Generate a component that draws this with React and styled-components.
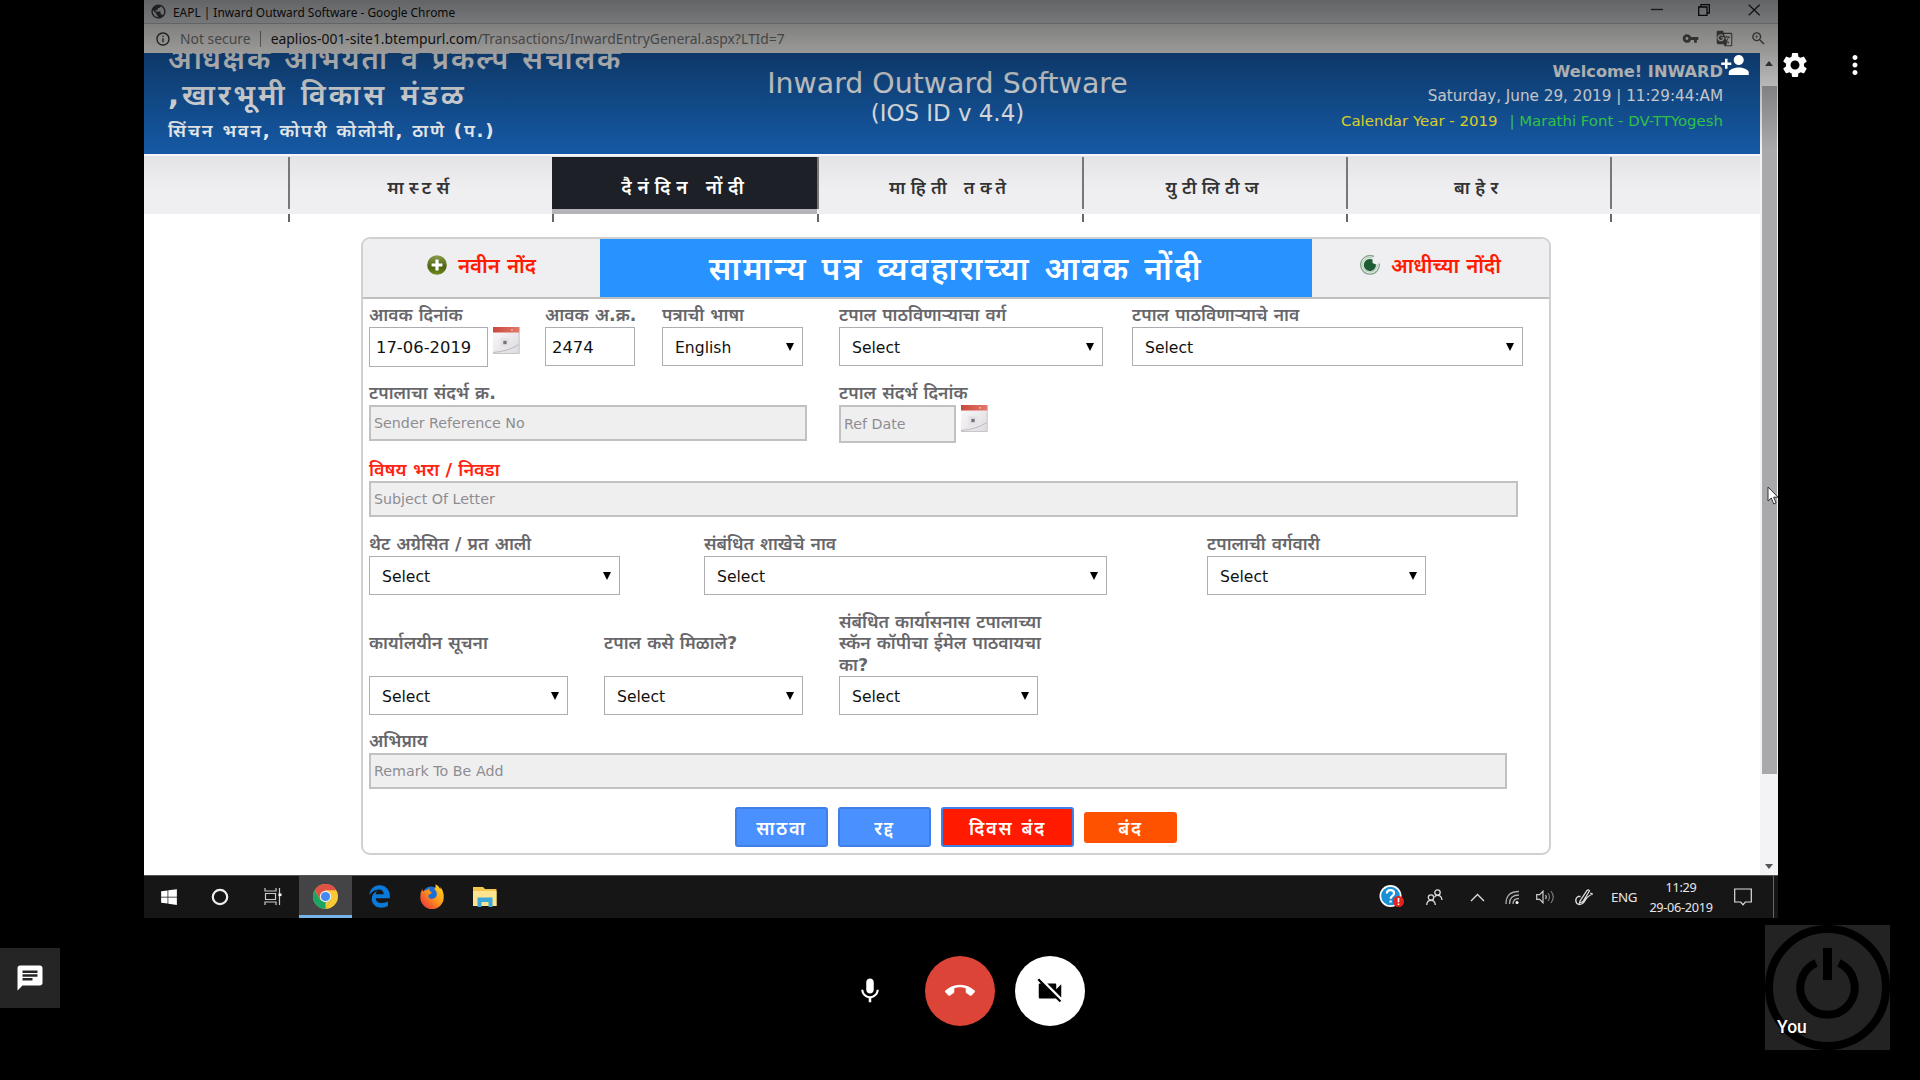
import React from "react";
import styled, { createGlobalStyle } from "styled-components";
import {
  MdPersonAdd, MdSettings, MdMoreVert, MdMic, MdCallEnd, MdVideocamOff, MdChat,
  MdVpnKey, MdGTranslate, MdZoomIn, MdPublic, MdInfoOutline,
} from "react-icons/md";
import { FaWindows, FaEdgeLegacy } from "react-icons/fa";

const GlobalStyle = createGlobalStyle`
  * { box-sizing: border-box; }
  body {
    margin: 0;
    background: #000;
    font-family: "DejaVu Sans", "Noto Sans", sans-serif;
    overflow: hidden;
  }
`;

/* ---------- call window ---------- */
const Call = styled.div`
  position: relative;
  width: 1920px;
  height: 1080px;
  background: #000;
  display: flex;
  flex-direction: column;
  overflow: hidden;
`;
const Shared = styled.div`
  position: relative;
  width: 1634px;
  height: 918px;
  margin-left: 144px;
  display: flex;
  flex-direction: column;
  background: #fff;
  overflow: hidden;
`;
const TopShade = styled.div`
  position: absolute;
  inset: 0 0 auto 0;
  height: 150px;
  background: linear-gradient(rgba(0, 0, 0, 0.56), rgba(0, 0, 0, 0));
`;
const CallActions = styled.div`
  position: absolute;
  top: 50px;
  right: 50px;
  display: flex;
  gap: 30px;
  color: #fff;
  font-size: 30px;
  svg { display: block; }
`;

/* ---------- browser chrome ---------- */
const TitleBar = styled.div`
  height: 24px;
  flex: none;
  display: flex;
  align-items: center;
  padding: 0 17px 0 6px;
  gap: 6px;
  background: #e2e4e8;
  border-bottom: 1px solid #b9bbbe;
  font: 11.9px "Noto Sans", sans-serif;
  color: #111;
`;
const GlobeMark = styled(MdPublic)`
  font-size: 17px;
  color: #444;
`;
const WindowButtons = styled.div`
  margin-left: auto;
  display: flex;
  align-items: center;
  gap: 35px;
  padding-bottom: 3px;
  svg { display: block; }
  svg:nth-child(2) { margin-right: 3px; }
`;
const AddressBar = styled.div`
  height: 29px;
  flex: none;
  display: flex;
  align-items: center;
  padding: 0 11px 0 11px;
  background: #f2f1ef;
  font: 13.9px "Noto Sans", sans-serif;
  color: #777;
`;
const InfoMark = styled(MdInfoOutline)`
  font-size: 16px;
  color: #333;
  margin-right: 9px;
`;
const AddressRule = styled.i`
  width: 1px;
  height: 16px;
  background: #888;
  margin: 0 10px 0 9px;
`;
const Host = styled.span`
  color: #1b1b1b;
`;
const AddressIcons = styled.div`
  margin-left: auto;
  display: flex;
  align-items: center;
  gap: 17px;
  color: #555;
  font-size: 17px;
`;

/* ---------- page ---------- */
const Viewport = styled.div`
  flex: 1;
  display: flex;
  min-height: 0;
`;
const Page = styled.div`
  width: 1616px;
  display: flex;
  flex-direction: column;
`;
const Scrollbar = styled.div`
  flex: 1;
  display: flex;
  flex-direction: column;
  align-items: center;
  background: #f3f2f4;
  padding: 8px 0 6px;
`;
const Thumb = styled.div`
  width: 15px;
  height: 688px;
  margin-top: 20px;
  background: #a9a9ab;
`;
const ScrollArrow = styled.div`
  width: 0;
  height: 0;
  border: 4px solid transparent;
  border-width: ${(p) => (p.$up ? "0 4px 5px" : "5px 4px 0")};
  border-color: ${(p) => (p.$up ? "transparent transparent #444" : "#555 transparent transparent")};
  margin-top: ${(p) => (p.$up ? "0" : "auto")};
`;

const Banner = styled.header`
  height: 101px;
  flex: none;
  display: grid;
  grid-template-columns: 518px 1fr 518px;
  background: #1558a3;
  color: #f3f6f8;
  overflow: hidden;
`;
const Office = styled.div`
  padding-left: 24px;
  margin-top: -12px;
  font-weight: 600;
  white-space: nowrap;
`;
const OfficeName = styled.div`
  font-size: 29px;
  line-height: 36px;
  letter-spacing: ${(p) => p.$track}px;
`;
const OfficeAddress = styled.div`
  font-size: 18.2px;
  line-height: 36px;
  letter-spacing: 1.75px;
`;
const Product = styled.div`
  text-align: center;
  padding: 11px 9px 0 0;
`;
const ProductName = styled.div`
  font-size: 28.4px;
  line-height: 39px;
  white-space: nowrap;
`;
const ProductVersion = styled.div`
  font-size: 22.9px;
  line-height: 20px;
`;
const Session = styled.div`
  display: flex;
  flex-direction: column;
  align-items: flex-end;
  padding: 6px 37px 0 0;
  font-size: 15.2px;
  line-height: 25px;
  white-space: pre;
`;
const Welcome = styled.strong`
  font-size: 16.2px;
`;
const YearLine = styled.div`
  font-size: 14.95px;
  color: #35d94c;
`;
const Year = styled.span`
  color: #f2e52e;
  margin-right: 12px;
`;

const Nav = styled.nav`
  height: 60px;
  flex: none;
  display: flex;
  padding: 3px 0 0 144px;
  background: linear-gradient(#e3e3e6, #efeef1 60%);
  box-shadow: inset 0 2px 0 #f6f6f8;
`;
const NavItem = styled.a`
  width: ${(p) => p.$w}px;
  height: 52px;
  display: flex;
  align-items: center;
  justify-content: center;
  padding-top: 8px;
  border-left: 2px solid #77777a;
  font-size: ${(p) => (p.$active ? 19 : 18)}px;
  letter-spacing: ${(p) => (p.$active ? 5.8 : 5.3)}px;
  font-weight: 600;
  color: ${(p) => (p.$active ? "#fff" : "#333")};
  background: ${(p) => (p.$active ? "#1d2026" : "transparent")};
  border-left-color: ${(p) => (p.$active ? "#1d2026" : "#77777a")};
  box-shadow: ${(p) => (p.$active ? "0 5px 0 #b4b4b9" : "none")};
`;
const Ticks = styled.div`
  height: 8px;
  flex: none;
  display: flex;
  padding-left: 144px;
`;
const Tick = styled.i`
  width: ${(p) => p.$w}px;
  border-left: 2px solid #666;
`;

const Panel = styled.main`
  width: 1190px;
  height: 618px;
  margin: 15px 0 0 217px;
  border: 2px solid #d0cfd2;
  border-radius: 9px;
  display: flex;
  flex-direction: column;
  overflow: hidden;
`;
const PanelHead = styled.div`
  height: 60px;
  flex: none;
  display: grid;
  grid-template-columns: 237px 712px 1fr;
  border-bottom: 2px solid #bfbfc2;
`;
const HeadLink = styled.a`
  display: flex;
  align-items: center;
  justify-content: center;
  gap: 11px;
  padding-bottom: 6px;
  background: #efeef0;
  color: #ff1a00;
  font-size: 20.4px;
  font-weight: 600;
`;
const HeadTitle = styled.h1`
  margin: 0;
  padding-bottom: 2px;
  display: flex;
  align-items: center;
  justify-content: center;
  background: #2893ff;
  color: #fff;
  font-size: 31.6px;
  letter-spacing: 2.5px;
  font-weight: 600;
  white-space: nowrap;
`;
const Form = styled.form`
  flex: 1;
  padding: 5px 0 0 6px;
`;
const Row = styled.div`
  display: grid;
  grid-template-columns: ${(p) => p.$cols};
  height: ${(p) => p.$h}px;
  align-items: start;
`;
const Field = styled.div`
  display: flex;
  flex-direction: column;
`;
const Label = styled.label`
  height: ${(p) => (p.$tall ? 65 : 23)}px;
  display: flex;
  align-items: center;
  padding-top: 1px;
  font-size: ${(p) => (p.$red ? 18 : 17.5)}px;
  line-height: 21.3px;
  font-weight: 600;
  white-space: pre;
  color: ${(p) => (p.$red ? "#ff2411" : "#67676b")};
`;
const ControlLine = styled.div`
  display: flex;
  gap: 5px;
`;
const Box = styled.div`
  width: ${(p) => p.$w}px;
  height: ${(p) => p.$h || 39}px;
  display: flex;
  align-items: center;
  padding: 1px 0 0 6px;
  border: 1px solid #aeadb1;
  background: #fff;
  color: #111;
  font-size: 16.4px;
`;
const Hint = styled(Box)`
  height: ${(p) => p.$h || 36}px;
  padding: 0 0 0 3px;
  border: 2px solid #c1c0c3;
  background: #f0eff0;
  color: #8d8d90;
  font-size: 14.25px;
`;
const SelectBox = styled(Box)`
  justify-content: space-between;
  padding: 2px 8px 0 12px;
  font-size: 15.6px;
`;
const Caret = styled.i`
  border: solid transparent;
  border-width: 8px 4px 0;
  border-top-color: #000;
  margin-bottom: 2px;
`;
const Buttons = styled.div`
  display: flex;
  align-items: center;
  gap: 10px;
  padding-left: 366px;
`;
const Button = styled.button`
  width: ${(p) => p.$w || 93}px;
  height: ${(p) => p.$h || 40}px;
  padding: 0;
  border: 2px solid ${(p) => p.$edge || "#3f7fe6"};
  border-radius: 3px;
  background: ${(p) => p.$bg || "#4a90ff"};
  color: #fff;
  font: 600 18.4px "DejaVu Sans", "Noto Sans", sans-serif;
  letter-spacing: 1.7px;
`;

/* ---------- taskbar ---------- */
const Taskbar = styled.footer`
  height: 43px;
  flex: none;
  display: flex;
  justify-content: space-between;
  background: #171616;
  border-top: 1px solid #555;
  color: #e6e6e6;
  font-family: "Noto Sans", sans-serif;
`;
const Apps = styled.div`
  display: flex;
`;
const AppSlot = styled.div`
  width: ${(p) => p.$w || 52}px;
  display: flex;
  align-items: center;
  justify-content: center;
  background: ${(p) => (p.$active ? "#444446" : "transparent")};
  border-bottom: 3px solid ${(p) => (p.$active ? "#76b5ec" : "transparent")};
  svg { display: block; margin-top: 2px; }
`;
const Tray = styled.div`
  display: flex;
  align-items: center;
  padding-right: 4px;
  svg { display: block; }
`;
const TrayItem = styled.div`
  width: ${(p) => p.$w}px;
  display: flex;
  justify-content: center;
  font-size: 13.4px;
  letter-spacing: -0.4px;
`;
const Clock = styled.div`
  width: 83px;
  padding: 0 11px 1px 0;
  text-align: center;
  font-size: 12.7px;
  line-height: 20px;
  letter-spacing: -0.3px;
  white-space: nowrap;
`;
const DesktopEdge = styled.i`
  width: 1px;
  height: 42px;
  background: #666;
  margin-left: 15px;
`;

/* ---------- call controls ---------- */
const CallBar = styled.div`
  flex: 1;
  display: grid;
  grid-template-columns: 1fr 250px 1fr;
  align-items: start;
`;
const ChatButton = styled.div`
  width: 60px;
  height: 60px;
  margin-top: 30px;
  display: flex;
  align-items: center;
  justify-content: center;
  background: #252525;
  color: #fff;
  font-size: 30px;
`;
const Controls = styled.div`
  display: flex;
  gap: 20px;
  margin-top: 38px;
`;
const Round = styled.div`
  width: 70px;
  height: 70px;
  border-radius: 50%;
  display: flex;
  align-items: center;
  justify-content: center;
  background: ${(p) => p.$bg || "transparent"};
  color: ${(p) => p.$fg || "#fff"};
  font-size: 30px;
`;
const SelfTile = styled.div`
  position: relative;
  width: 125px;
  height: 125px;
  margin: 7px 30px 0 auto;
  background: #232323;
  svg { display: block; }
`;
const SelfName = styled.span`
  position: absolute;
  left: 12px;
  bottom: 13px;
  color: #fff;
  font: 500 17.5px/20px Roboto, sans-serif;
  text-shadow: 0 1px 2px #000;
`;
const Pointer = styled.svg`
  position: absolute;
  left: 1623px;
  top: 486px;
`;

/* ---------- drawings ---------- */
const CalendarIcon = () => (
  <svg width="27" height="27" viewBox="0 0 27 27">
    <defs>
      <linearGradient id="calTop"><stop offset="0" stopColor="#c8483c" /><stop offset="1" stopColor="#e4786a" /></linearGradient>
      <linearGradient id="calPaper" x2="1" y2="1"><stop offset="0" stopColor="#fbfafb" /><stop offset="1" stopColor="#dddadf" /></linearGradient>
    </defs>
    <rect width="26.5" height="26.5" fill="url(#calPaper)" />
    <rect width="26.5" height="5.5" fill="url(#calTop)" />
    <circle cx="19" cy="2.8" r=".9" fill="#fff" opacity=".6" />
    <rect x="7.5" y="11" width="9" height="9" fill="#e6e3e8" />
    <path d="M10.3 13.8h3.4v3.4h-3.4z" fill="#77737b" />
    <path d="M0 25.5q15-1 26-8" stroke="#bdb9c0" fill="none" />
    <path d="M26.2 5.5v21H0" stroke="#c9c6cb" fill="none" />
  </svg>
);
const AddIcon = () => (
  <svg width="20" height="20" viewBox="0 0 20 20">
    <defs><linearGradient id="olive" x2="0" y2="1"><stop offset="0" stopColor="#8a9c4e" /><stop offset=".6" stopColor="#4f6412" /><stop offset="1" stopColor="#6f8a17" /></linearGradient></defs>
    <circle cx="10" cy="10" r="9.8" fill="url(#olive)" />
    <path d="M10 4.6v10.8M4.6 10h10.8" stroke="#fff" strokeWidth="3.2" />
  </svg>
);
const HistoryIcon = () => (
  <svg width="20" height="20" viewBox="0 0 20 20" fill="none">
    <path d="M14 1.5A9.3 9.3 0 1 0 19.200 8.500" stroke="#7fa486" strokeWidth="1.3" />
    <path d="M12.500 3A7.300 7.300 0 1 0 17.200 9" stroke="#b9d0bd" strokeWidth="1.3" />
    <path d="M12.500 4.500A6.100 6.100 0 1 0 16 9.500L12.500 8z" fill="#1e5c33" />
  </svg>
);
const MinimizeIcon = () => <svg width="12" height="12"><path d="M0 5.5h12" stroke="#333" strokeWidth="1.4" /></svg>;
const RestoreIcon = () => <svg width="12" height="12" fill="none" stroke="#111" strokeWidth="1.3"><path d="M.7 3h8.3v8.3H.7zM3 3V.7h8.3V9H9" /></svg>;
const CloseIcon = () => <svg width="13" height="12"><path d="M.7.7l11 10.6M11.700.7l-11 10.600" stroke="#222" strokeWidth="1.2" /></svg>;
const CortanaIcon = () => <svg width="18" height="18"><circle cx="9" cy="9" r="7.2" fill="none" stroke="#eee" strokeWidth="2.2" /></svg>;
const TaskViewIcon = () => (
  <svg width="18" height="17" fill="none" stroke="#ccc" strokeWidth="1.2">
    <path d="M1 0v3h11V0M1.500 5.500h10v6h-10zM1 17v-3h11v3M15.500 0v17" /><path d="M14.500 5.500h3v2.600h-3z" fill="#fff" stroke="none" />
  </svg>
);
const ChromeIcon = () => (
  <svg width="25" height="25" viewBox="-12 -12 24 24">
    <circle r="12" fill="#fbc934" />
    <path d="M-10.4-6A12 12 0 0 1 10.4-6H0L-5.2 3z" fill="#de5246" />
    <path d="M-10.4-6A12 12 0 0 0 0 12L5.2 3-5.2 3z" fill="#1da362" />
    <path d="M0 12L5.2 3 0 6z" fill="#fbc934" />
    <circle r="5.5" fill="#f1f1f1" /><circle r="4.4" fill="#4688f1" />
  </svg>
);
const FirefoxIcon = () => (
  <svg width="24" height="25" viewBox="0 0 24 25">
    <defs><linearGradient id="fox" x1="1" x2="0" y2="1"><stop offset="0" stopColor="#ffe226" /><stop offset=".45" stopColor="#ff9a1c" /><stop offset="1" stopColor="#e8233f" /></linearGradient></defs>
    <circle cx="11" cy="11" r="8.5" fill="#1b6fd8" />
    <path d="M2.5 4.5q-.3 2 .8 3Q5 5.5 7.5 6l1.800-2q-.8 3 2.500 4.300-.4 2-3 2.400-1 1-.3 2.600 2 2.500 5 1.300 4.500-1.500 3-6.500-.7-2-2.500-3Q16 4.500 15.500.3q3 1 4.700 4.700.5-.5.3-2Q24 8 23.700 13.500A11.700 11.500 0 0 1 .3 13.500Q.3 8 2.500 4.500z" fill="url(#fox)" />
  </svg>
);
const FolderIcon = () => (
  <svg width="24" height="20" viewBox="0 0 24 20">
    <path d="M0 0h10l2 2h11.5v17H0z" fill="#f3c64f" /><path d="M0 4h23.5v15H0z" fill="#ffe48f" />
    <path d="M4.500 20v-9.500h15V20h-4v-5h-7v5z" fill="#3aa7dd" />
  </svg>
);
const HelpIcon = () => (
  <svg width="25" height="24" viewBox="0 0 25 24">
    <circle cx="11.5" cy="11" r="11" fill="#fff" /><circle cx="11.5" cy="11" r="9.3" fill="#1b8fd6" />
    <path d="M7.800 8.500q.2-3.300 3.700-3.300t3.600 3q0 1.700-2 2.900-1.400.9-1.400 2.700M11.600 15.400v2.200" stroke="#fff" strokeWidth="2.2" fill="none" />
    <circle cx="19.5" cy="16.5" r="5.5" fill="#e3231d" /><path d="M19.500 13v4.200M19.500 18.500v1.500" stroke="#fff" strokeWidth="1.6" />
  </svg>
);
const PeopleIcon = () => (
  <svg width="17" height="17" fill="none" stroke="#ddd" strokeWidth="1.3">
    <circle cx="5" cy="8.5" r="2.7" /><path d="M.7 16q.3-4.600 4.300-4.600T9.300 16" /><circle cx="11.5" cy="3.5" r="2.7" /><path d="M8.500 8.200q1-1.800 3-1.800 4 0 4.500 4.600" />
  </svg>
);
const ChevronIcon = () => <svg width="15" height="9" fill="none" stroke="#ddd" strokeWidth="1.4"><path d="M1 8l6.500-6.500L14 8" /></svg>;
const WifiIcon = () => (
  <svg width="15" height="15" fill="none" stroke="#aaa" strokeWidth="1.3">
    <path d="M1 14Q1 1.500 14 1.500M4.500 14q0-9 9.500-9M8 14q0-5.500 6-5.500" /><circle cx="12" cy="12.5" r="1.5" fill="#fff" stroke="none" />
  </svg>
);
const VolumeIcon = () => (
  <svg width="19" height="14" fill="none" stroke="#ccc" strokeWidth="1.2">
    <path d="M.7 4.700h3l3.300-3.500v11.600L3.700 9.300h-3zM9.500 5q1.500 2 0 4" /><path d="M12 3q3 4 0 8M15 1.200q4.500 5.800 0 11.600" stroke="#777" />
  </svg>
);
const PenIcon = () => (
  <svg width="18" height="18" fill="none" stroke="#ddd" strokeWidth="1.3">
    <path d="M5 13L12 2.500q1.500-1.500 2.500.3L8 13.500 4.500 15zM5.500 8.500H3.200Q.8 9.500.8 12.500T4 16.500q4 0 6-4T17.300 6l-2-.8" />
  </svg>
);
const NoteIcon = () => <svg width="18" height="18" fill="none" stroke="#ddd" strokeWidth="1.2"><path d="M.7 1h16.600v13h-6l-2.300 2.700L6.700 14h-6z" /></svg>;
const PowerDrawing = () => (
  <svg width="125" height="125" viewBox="0 0 125 125">
    <circle cx="62.5" cy="62.5" r="58.5" fill="none" stroke="#000" strokeWidth="8" />
    <path d="M51 37.900A27.200 27.200 0 1 0 74 37.900" fill="none" stroke="#000" strokeWidth="8" />
    <rect x="58" y="23" width="9" height="32" fill="#000" />
  </svg>
);

/* ---------- pieces ---------- */
const nav = [
  { text: "मास्टर्स", w: 264 },
  { text: "दैनंदिन नोंदी", w: 265, active: true },
  { text: "माहिती तक्ते", w: 264.5 },
  { text: "युटीलिटीज", w: 264.5 },
  { text: "बाहेर", w: 263.5 },
  { text: "", w: 40 },
];
const Select = ({ label, w, value = "Select", tall, h }) => (
  <Field>
    <Label $tall={tall}>{label}</Label>
    <SelectBox $w={w} $h={h}>{value}<Caret /></SelectBox>
  </Field>
);

export default function App() {
  return (
    <Call>
      <GlobalStyle />
      <Shared>
        <TitleBar>
          <GlobeMark />EAPL | Inward Outward Software - Google Chrome
          <WindowButtons><MinimizeIcon /><RestoreIcon /><CloseIcon /></WindowButtons>
        </TitleBar>
        <AddressBar>
          <InfoMark />Not secure<AddressRule />
          <Host>eaplios-001-site1.btempurl.com</Host>/Transactions/InwardEntryGeneral.aspx?LTId=7
          <AddressIcons><MdVpnKey /><MdGTranslate /><MdZoomIn /></AddressIcons>
        </AddressBar>
        <Viewport>
          <Page>
            <Banner>
              <Office>
                <OfficeName $track={1.9}>अधिक्षक अभियंता व प्रकल्प संचालक</OfficeName>
                <OfficeName $track={3}>,खारभूमी विकास मंडळ</OfficeName>
                <OfficeAddress>सिंचन भवन, कोपरी कोलोनी, ठाणे (प.)</OfficeAddress>
              </Office>
              <Product>
                <ProductName>Inward Outward Software</ProductName>
                <ProductVersion>(IOS ID v 4.4)</ProductVersion>
              </Product>
              <Session>
                <Welcome>Welcome! INWARD</Welcome>
                <span>Saturday, June 29, 2019 | 11:29:44:AM</span>
                <YearLine><Year>Calendar Year - 2019</Year>| Marathi Font - DV-TTYogesh</YearLine>
              </Session>
            </Banner>
            <Nav>
              {nav.map((n, i) => <NavItem key={i} $w={n.w} $active={n.active}>{n.text}</NavItem>)}
            </Nav>
            <Ticks>{nav.map((n, i) => <Tick key={i} $w={n.w} />)}</Ticks>
            <Panel>
              <PanelHead>
                <HeadLink><AddIcon />नवीन नोंद</HeadLink>
                <HeadTitle>सामान्य पत्र व्यवहाराच्या आवक नोंदी</HeadTitle>
                <HeadLink><HistoryIcon />आधीच्या नोंदी</HeadLink>
              </PanelHead>
              <Form>
                <Row $h={78} $cols="176px 117px 177px 293px 1fr">
                  <Field>
                    <Label>आवक दिनांक</Label>
                    <ControlLine><Box $w={119} $h={40}>17-06-2019</Box><CalendarIcon /></ControlLine>
                  </Field>
                  <Field><Label>आवक अ.क्र.</Label><Box $w={90}>2474</Box></Field>
                  <Select label="पत्राची भाषा" w={141} value="English" />
                  <Select label="टपाल पाठविणाऱ्याचा वर्ग" w={264} />
                  <Select label="टपाल पाठविणाऱ्याचे नाव" w={391} />
                </Row>
                <Row $h={76} $cols="470px 1fr">
                  <Field><Label>टपालाचा संदर्भ क्र.</Label><Hint $w={438}>Sender Reference No</Hint></Field>
                  <Field>
                    <Label>टपाल संदर्भ दिनांक</Label>
                    <ControlLine><Hint $w={117} $h={38}>Ref Date</Hint><CalendarIcon /></ControlLine>
                  </Field>
                </Row>
                <Row $h={75} $cols="1fr">
                  <Field><Label $red>विषय भरा / निवडा</Label><Hint $w={1149}>Subject Of Letter</Hint></Field>
                </Row>
                <Row $h={78} $cols="335px 503px 1fr">
                  <Select label="थेट अग्रेसित / प्रत आली" w={251} />
                  <Select label="संबंधित शाखेचे नाव" w={403} />
                  <Select label="टपालाची वर्गवारी" w={219} />
                </Row>
                <Row $h={119} $cols="235px 235px 1fr">
                  <Select tall label="कार्यालयीन सूचना" w={199} />
                  <Select tall label="टपाल कसे मिळाले?" w={199} />
                  <Select tall label={"संबंधित कार्यासनास टपालाच्या\nस्कॅन कॉपीचा ईमेल पाठवायचा\nका?"} w={199} />
                </Row>
                <Row $h={77} $cols="1fr">
                  <Field><Label>अभिप्राय</Label><Hint $w={1138}>Remark To Be Add</Hint></Field>
                </Row>
                <Buttons>
                  <Button type="button">साठवा</Button>
                  <Button type="button">रद्द</Button>
                  <Button type="button" $w={133} $bg="#ff1a00">दिवस बंद</Button>
                  <Button type="button" $h={31} $bg="#ff5200" $edge="#ff5200">बंद</Button>
                </Buttons>
              </Form>
            </Panel>
          </Page>
          <Scrollbar><ScrollArrow $up /><Thumb /><ScrollArrow /></Scrollbar>
        </Viewport>
        <Taskbar>
          <Apps>
            <AppSlot $w={50}><FaWindows size={18} color="#fff" /></AppSlot>
            <AppSlot><CortanaIcon /></AppSlot>
            <AppSlot $w={53}><TaskViewIcon /></AppSlot>
            <AppSlot $w={53} $active><ChromeIcon /></AppSlot>
            <AppSlot $w={54}><FaEdgeLegacy size={23} color="#0a79d8" /></AppSlot>
            <AppSlot><FirefoxIcon /></AppSlot>
            <AppSlot $w={54}><FolderIcon /></AppSlot>
          </Apps>
          <Tray>
            <TrayItem $w={44}><HelpIcon /></TrayItem>
            <TrayItem $w={43}><PeopleIcon /></TrayItem>
            <TrayItem $w={42}><ChevronIcon /></TrayItem>
            <TrayItem $w={28}><WifiIcon /></TrayItem>
            <TrayItem $w={39}><VolumeIcon /></TrayItem>
            <TrayItem $w={38}><PenIcon /></TrayItem>
            <TrayItem $w={42}>ENG</TrayItem>
            <Clock>11:29<br />29-06-2019</Clock>
            <TrayItem $w={30}><NoteIcon /></TrayItem>
            <DesktopEdge />
          </Tray>
        </Taskbar>
        <TopShade />
        <Pointer width="12" height="19" viewBox="0 0 12 19">
          <path d="M1 1v14l3.300-3 2.500 6 2.300-1-2.500-5.800H11z" fill="#fff" stroke="#333" />
        </Pointer>
      </Shared>
      <CallBar>
        <ChatButton><MdChat /></ChatButton>
        <Controls>
          <Round><MdMic /></Round>
          <Round $bg="#db4437"><MdCallEnd /></Round>
          <Round $bg="#fff" $fg="#000"><MdVideocamOff /></Round>
        </Controls>
        <SelfTile><PowerDrawing /><SelfName>You</SelfName></SelfTile>
      </CallBar>
      <CallActions><MdPersonAdd /><MdSettings /><MdMoreVert /></CallActions>
    </Call>
  );
}
